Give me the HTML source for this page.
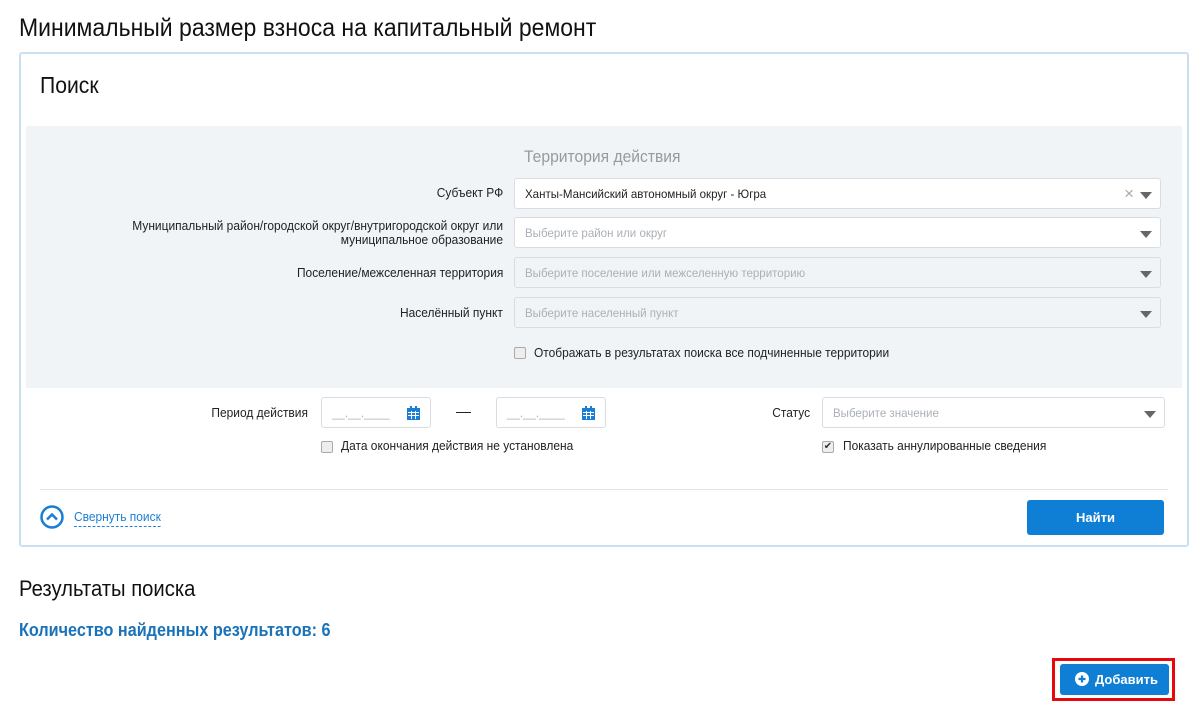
<!DOCTYPE html>
<html><head><meta charset="utf-8"><style>
*{box-sizing:border-box;margin:0;padding:0}
body{width:1191px;height:705px;background:#fff;font-family:"Liberation Sans",sans-serif;color:#222;position:relative;overflow:hidden}
.a{position:absolute;white-space:nowrap}
.n{transform:scaleX(.92);transform-origin:left center}
.nr{transform:scaleX(.92);transform-origin:right center;text-align:right}
.inp{position:absolute;background:#fff;border:1px solid #d9dde2;border-radius:3px;height:31px}
.dis{background:#f1f4f7}
.ph{position:absolute;left:10px;top:8px;font-size:12px;color:#aab0b6;transform:scaleX(.96);transform-origin:left}
.tri{position:absolute;right:8px;top:13px;width:0;height:0;border-left:6px solid transparent;border-right:6px solid transparent;border-top:7px solid #666}
.lbl{font-size:13px;color:#222}
.cb{position:absolute;width:12px;height:12px;border:1px solid #aaa;border-radius:2px;background:#eee}
</style></head><body>
<div class="a n" style="left:19px;top:14px;font-size:25px;color:#111">Минимальный размер взноса на капитальный ремонт</div>
<div class="a" style="left:19px;top:52px;width:1170px;height:495px;border:2px solid #c9e0f3;border-radius:3px"></div>
<div class="a n" style="left:40px;top:72px;font-size:23px;color:#111">Поиск</div>
<div class="a" style="left:26px;top:126px;width:1156px;height:262px;background:#f1f4f7"></div>
<div class="a n" style="left:524px;top:147px;font-size:17px;color:#999">Территория действия</div>

<div class="a lbl nr" style="right:688px;top:185px">Субъект РФ</div>
<div class="inp" style="left:514px;top:178px;width:647px"><div class="ph" style="color:#222">Ханты-Мансийский автономный округ - Югра</div><div style="position:absolute;right:26px;top:5px;color:#aaa;font-size:17px">×</div><div class="tri"></div></div>

<div class="a lbl nr" style="right:688px;top:219px;line-height:14px">Муниципальный район/городской округ/внутригородской округ или<br>муниципальное образование</div>
<div class="inp" style="left:514px;top:217px;width:647px"><div class="ph">Выберите район или округ</div><div class="tri"></div></div>

<div class="a lbl nr" style="right:688px;top:265px">Поселение/межселенная территория</div>
<div class="inp dis" style="left:514px;top:257px;width:647px"><div class="ph">Выберите поселение или межселенную территорию</div><div class="tri"></div></div>

<div class="a lbl nr" style="right:688px;top:305px">Населённый пункт</div>
<div class="inp dis" style="left:514px;top:297px;width:647px"><div class="ph">Выберите населенный пункт</div><div class="tri"></div></div>

<div class="cb" style="left:514px;top:347px"></div>
<div class="a lbl n" style="left:534px;top:345px">Отображать в результатах поиска все подчиненные территории</div>

<div class="a lbl nr" style="right:883px;top:405px">Период действия</div>
<div class="inp" style="left:321px;top:397px;width:110px"><div class="ph">__.__.____</div><svg style="position:absolute;right:10px;top:8px" width="13" height="14" viewBox="0 0 13 14"><rect x="0" y="2" width="13" height="12" fill="#1a7fd4"/><rect x="3" y="0" width="2" height="3" fill="#1a7fd4"/><rect x="8" y="0" width="2" height="3" fill="#1a7fd4"/><g fill="#fff"><rect x="1" y="6" width="11" height="1"/><rect x="1" y="9" width="11" height="1"/><rect x="4" y="5" width="1" height="8"/><rect x="8" y="5" width="1" height="8"/></g></svg></div>
<div class="a" style="left:456px;top:412px;width:15px;height:1px;background:#222"></div>
<div class="inp" style="left:496px;top:397px;width:110px"><div class="ph">__.__.____</div><svg style="position:absolute;right:10px;top:8px" width="13" height="14" viewBox="0 0 13 14"><rect x="0" y="2" width="13" height="12" fill="#1a7fd4"/><rect x="3" y="0" width="2" height="3" fill="#1a7fd4"/><rect x="8" y="0" width="2" height="3" fill="#1a7fd4"/><g fill="#fff"><rect x="1" y="6" width="11" height="1"/><rect x="1" y="9" width="11" height="1"/><rect x="4" y="5" width="1" height="8"/><rect x="8" y="5" width="1" height="8"/></g></svg></div>
<div class="cb" style="left:321px;top:441px"></div>
<div class="a lbl n" style="left:341px;top:438px">Дата окончания действия не установлена</div>

<div class="a lbl nr" style="right:381px;top:405px">Статус</div>
<div class="inp" style="left:822px;top:397px;width:343px"><div class="ph">Выберите значение</div><div class="tri"></div></div>
<div class="cb" style="left:822px;top:441px;text-align:center;font-size:10px;line-height:10px;color:#333">✔</div>
<div class="a lbl n" style="left:843px;top:438px">Показать аннулированные сведения</div>

<div class="a" style="left:40px;top:489px;width:1128px;height:1px;background:#e2e4e6"></div>
<svg class="a" style="left:40px;top:505px" width="24" height="24" viewBox="0 0 24 24"><circle cx="12" cy="12" r="10.5" fill="none" stroke="#1a7fd4" stroke-width="2.5"/><path d="M7 14.5 L12 9.5 L17 14.5" fill="none" stroke="#1a7fd4" stroke-width="2.5"/></svg>
<div class="a n" style="left:74px;top:509px;font-size:13px;color:#1a7fd4;border-bottom:1px dashed #1a7fd4;padding-bottom:2px">Свернуть поиск</div>
<div class="a" style="left:1027px;top:500px;width:137px;height:35px;background:#0f7fd6;border-radius:3px;color:#fff;font-weight:bold;font-size:13px;text-align:center;line-height:35px">Найти</div>

<div class="a n" style="left:19px;top:576px;font-size:22px;color:#111">Результаты поиска</div>
<div class="a" style="left:19px;top:620px;font-size:18px;color:#1a72b8;font-weight:bold;transform:scaleX(.9);transform-origin:left center">Количество найденных результатов: 6</div>

<div class="a" style="left:1052px;top:658px;width:123px;height:43px;border:3px solid #e5080c"></div>
<div class="a" style="left:1060px;top:664px;width:109px;height:31px;background:#0f7fd6;border-radius:3px;color:#fff;font-weight:bold;font-size:13px;line-height:31px;padding-left:35px">Добавить</div>
<svg class="a" style="left:1075px;top:672px" width="14" height="14" viewBox="0 0 14 14"><circle cx="7" cy="7" r="7" fill="#fff"/><path d="M7 3.5V10.5M3.5 7H10.5" stroke="#0f7fd6" stroke-width="2.2"/></svg>
</body></html>
